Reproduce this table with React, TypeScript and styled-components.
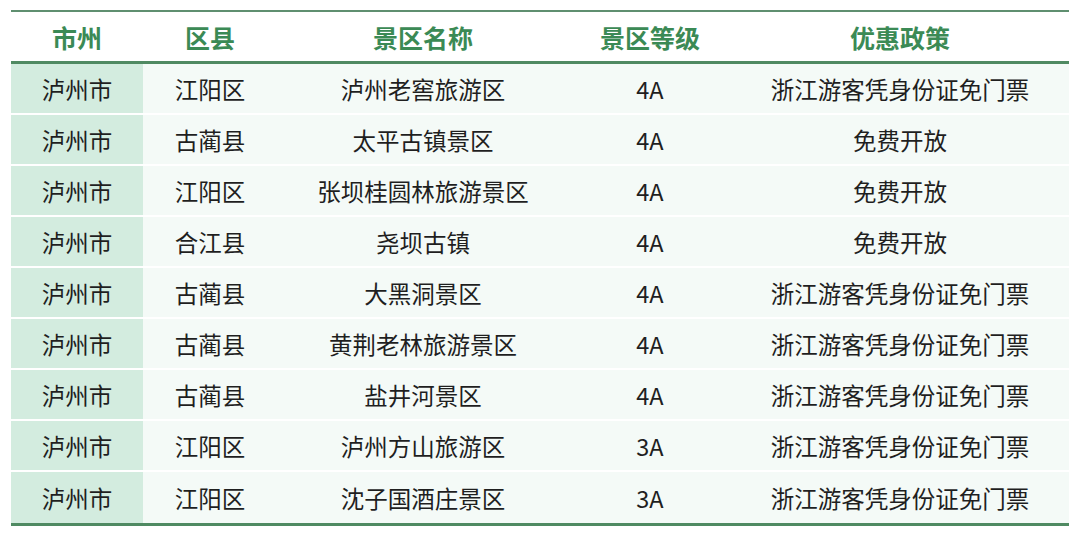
import React from "react";
import styled, { createGlobalStyle } from "styled-components";

const Global = createGlobalStyle`
  html, body { margin: 0; padding: 0; background: #ffffff; }
  body { font-family: "Noto Sans CJK SC", "Noto Sans", sans-serif; }
`;

const Page = styled.div`
  padding: 10px 11px 0 11px;
`;

const Table = styled.div`
  width: 1058px;
  border-top: 2px solid #5f8f70;
  border-bottom: 3px solid #4f8a62;
`;

const cols = "132px 134px 292px 162px 338px";

const HeaderRow = styled.div`
  display: grid;
  grid-template-columns: ${cols};
  height: 49px;
  border-bottom: 3px solid #4f8a62;
`;

const HeadCell = styled.div`
  display: flex;
  align-items: center;
  justify-content: center;
  font-size: 25px;
  font-weight: 700;
  color: #3b8a55;
`;

const Row = styled.div<{ $last?: boolean }>`
  display: grid;
  grid-template-columns: ${cols};
  height: 51px;
  box-sizing: border-box;
  border-bottom: ${(p) => (p.$last ? "0" : "2px solid #ffffff")};
`;

const Cell = styled.div<{ $first?: boolean }>`
  display: flex;
  align-items: center;
  justify-content: center;
  font-size: 23.5px;
  color: #1f1f1f;
  background: ${(p) => (p.$first ? "#d3ecdf" : "#f4faf7")};
  padding-top: 1px;
`;

const headers = ["市州", "区县", "景区名称", "景区等级", "优惠政策"];

const rows: string[][] = [
  ["泸州市", "江阳区", "泸州老窖旅游区", "4A", "浙江游客凭身份证免门票"],
  ["泸州市", "古蔺县", "太平古镇景区", "4A", "免费开放"],
  ["泸州市", "江阳区", "张坝桂圆林旅游景区", "4A", "免费开放"],
  ["泸州市", "合江县", "尧坝古镇", "4A", "免费开放"],
  ["泸州市", "古蔺县", "大黑洞景区", "4A", "浙江游客凭身份证免门票"],
  ["泸州市", "古蔺县", "黄荆老林旅游景区", "4A", "浙江游客凭身份证免门票"],
  ["泸州市", "古蔺县", "盐井河景区", "4A", "浙江游客凭身份证免门票"],
  ["泸州市", "江阳区", "泸州方山旅游区", "3A", "浙江游客凭身份证免门票"],
  ["泸州市", "江阳区", "沈子国酒庄景区", "3A", "浙江游客凭身份证免门票"],
];

export default function App() {
  return (
    <>
      <Global />
      <Page>
        <Table>
          <HeaderRow>
            {headers.map((h) => (
              <HeadCell key={h}>{h}</HeadCell>
            ))}
          </HeaderRow>
          {rows.map((r, i) => (
            <Row key={i} $last={i === rows.length - 1}>
              {r.map((c, j) => (
                <Cell key={j} $first={j === 0}>
                  {c}
                </Cell>
              ))}
            </Row>
          ))}
        </Table>
      </Page>
    </>
  );
}
